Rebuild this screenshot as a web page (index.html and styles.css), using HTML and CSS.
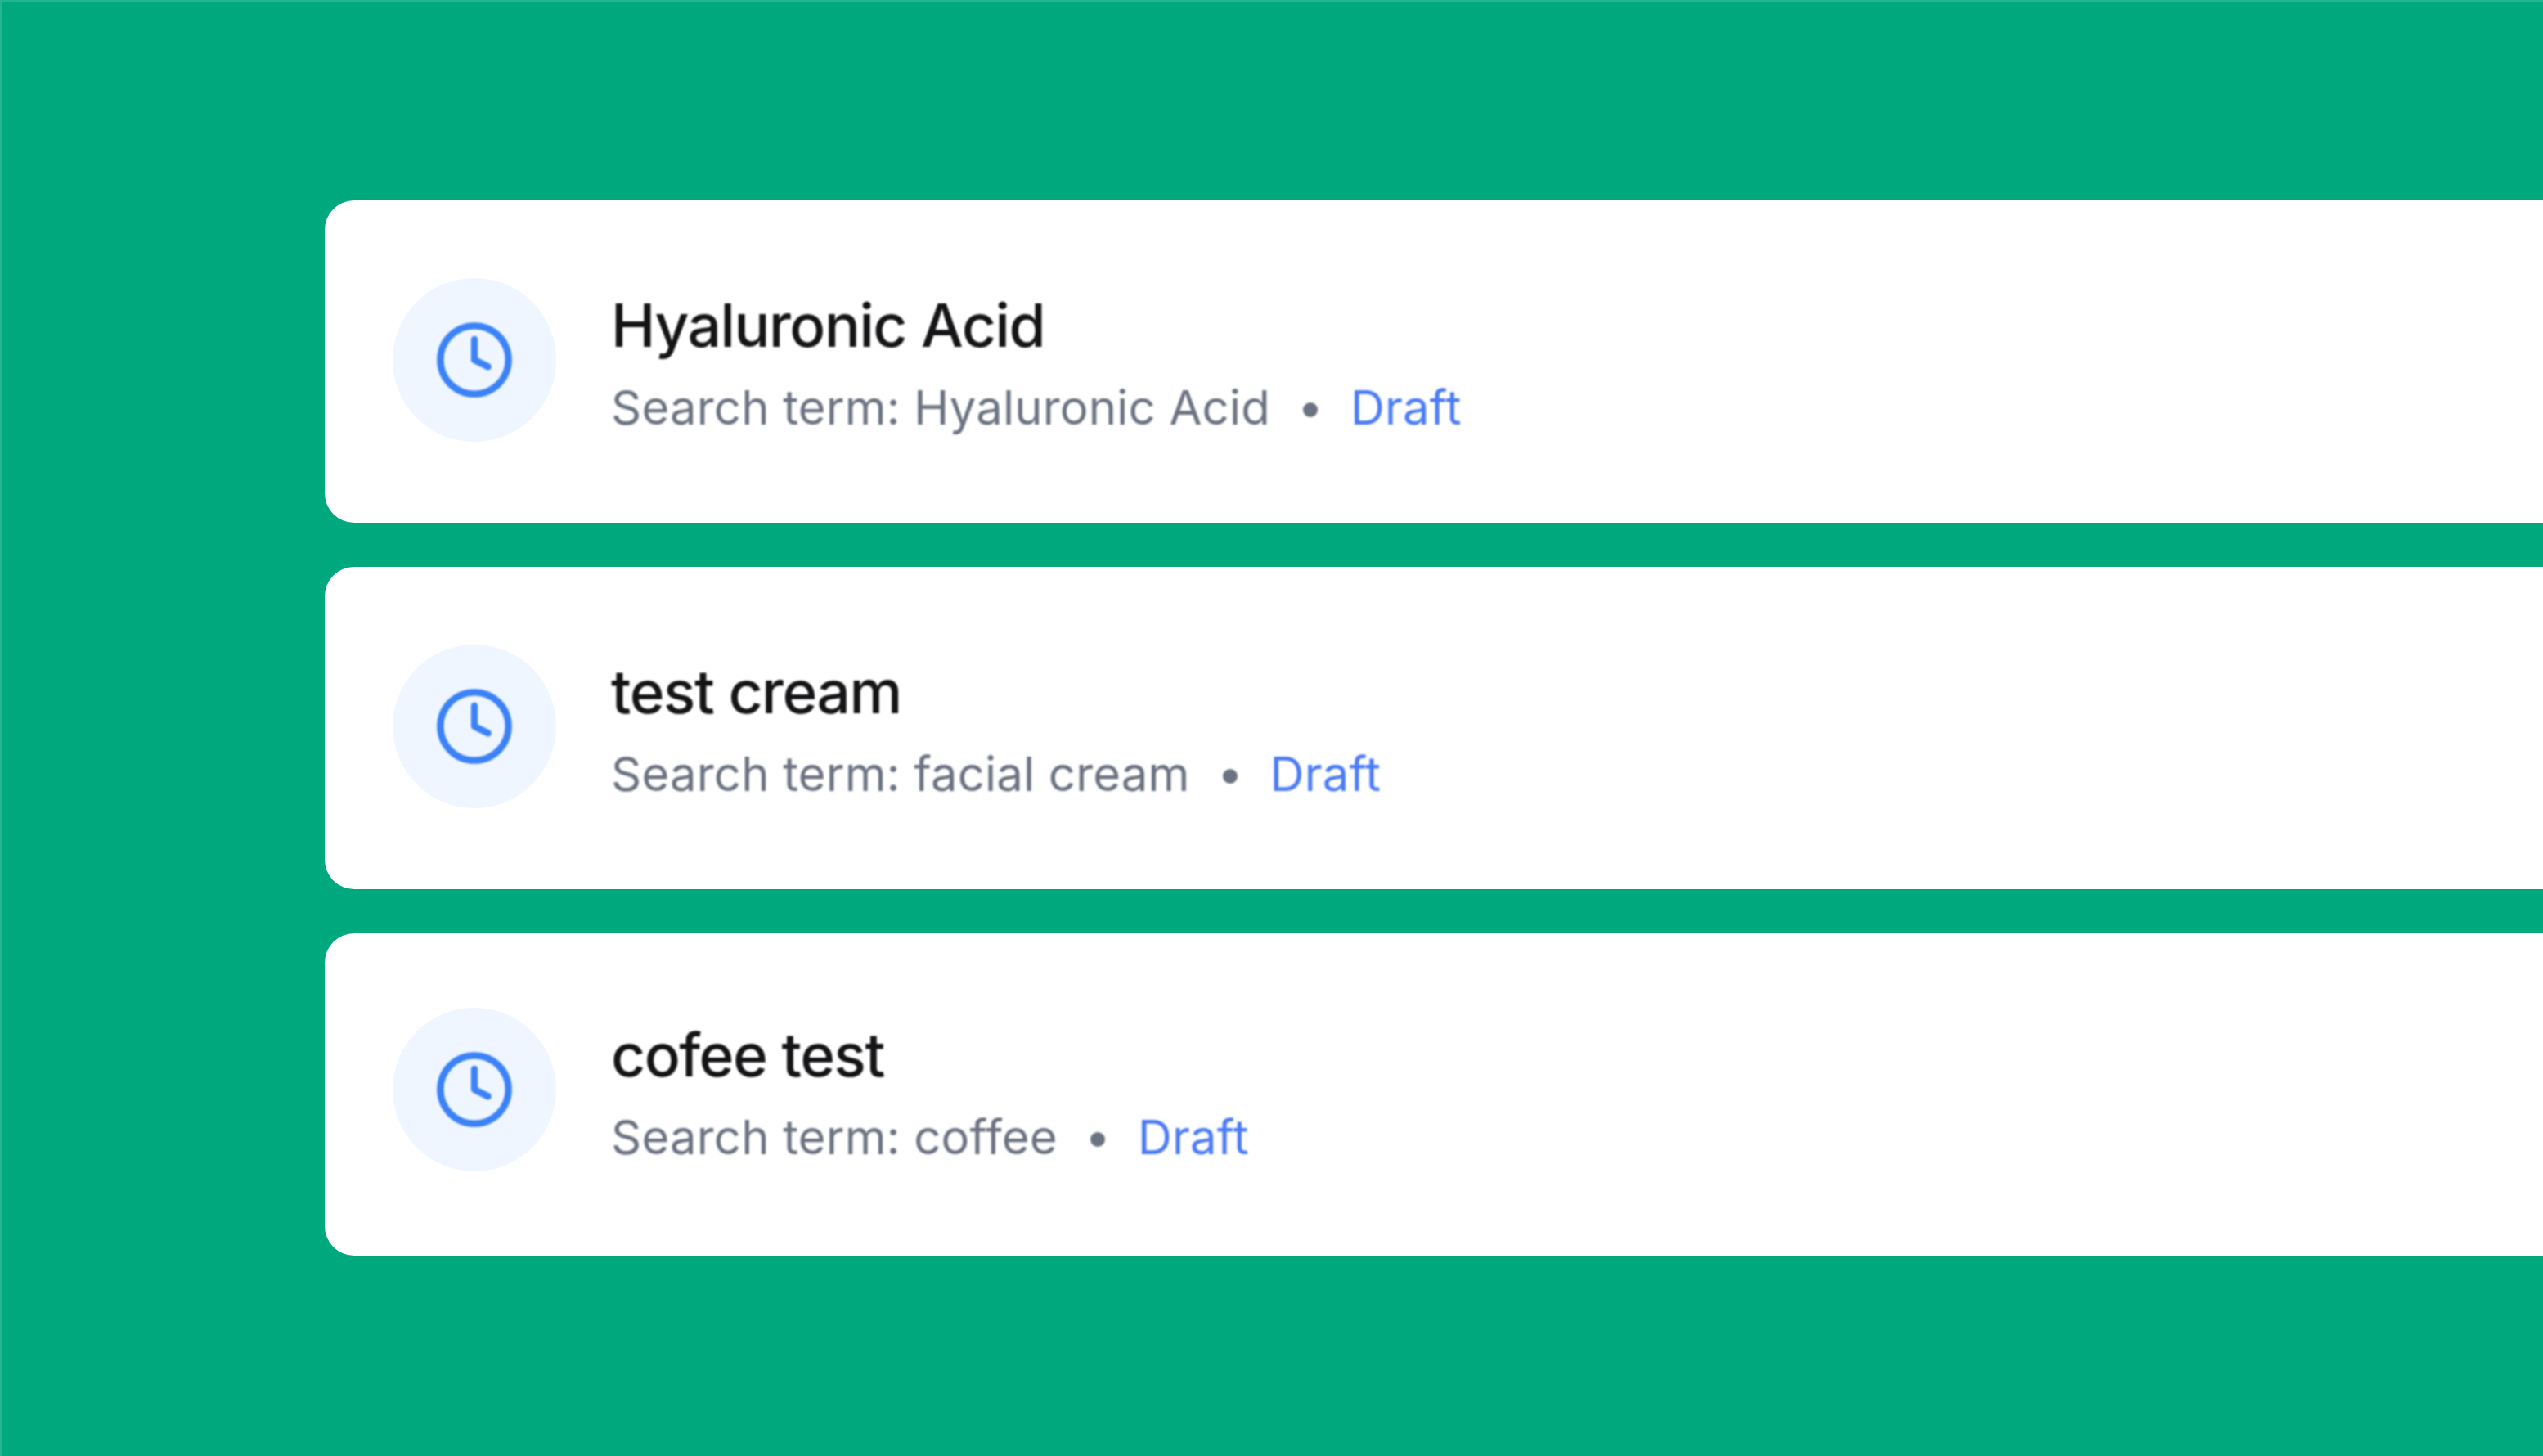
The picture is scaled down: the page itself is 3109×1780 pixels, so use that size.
FILE: index.html
```html
<!DOCTYPE html>
<html lang="en">
<head>
    <meta charset="UTF-8">
    <title>Searches</title>
    <link rel="stylesheet" href="styles.css">
</head>
<body>
    <div class="list">
        <div class="card">
            <div class="icon-wrap">
                <svg class="clock" viewBox="0 0 24 24"><circle cx="12" cy="12" r="10"/><polyline points="12 6 12 12 16 14"/></svg>
            </div>
            <div class="info">
                <div class="title">Hyaluronic Acid</div>
                <div class="meta"><span>Search term: Hyaluronic Acid</span><span class="dot"></span><span class="status">Draft</span></div>
            </div>
        </div>
        <div class="card">
            <div class="icon-wrap">
                <svg class="clock" viewBox="0 0 24 24"><circle cx="12" cy="12" r="10"/><polyline points="12 6 12 12 16 14"/></svg>
            </div>
            <div class="info">
                <div class="title">test cream</div>
                <div class="meta"><span>Search term: facial cream</span><span class="dot"></span><span class="status">Draft</span></div>
            </div>
        </div>
        <div class="card card-last">
            <div class="icon-wrap">
                <svg class="clock" viewBox="0 0 24 24"><circle cx="12" cy="12" r="10"/><polyline points="12 6 12 12 16 14"/></svg>
            </div>
            <div class="info">
                <div class="title">cofee test</div>
                <div class="meta"><span>Search term: coffee</span><span class="dot"></span><span class="status">Draft</span></div>
            </div>
        </div>
    </div>
</body>
</html>
```

FILE: styles.css
```css
html, body {
    height: 100%;
}
body {
    margin: 0;
    overflow: hidden;
    background: #00a87d;
    box-shadow: inset 2px 2px 0 rgba(255, 255, 255, 0.15);
    font-family: Inter, "Noto Sans", sans-serif;
}
.list {
    display: flex;
    flex-direction: column;
    gap: 54px;
    width: 3000px;
    padding: 245px 0 0 397px;
}
.card {
    display: flex;
    align-items: center;
    gap: 67px;
    box-sizing: border-box;
    height: 394px;
    padding: 0 0 4px 83px;
    background: #fff;
    border-radius: 36px;
}
.card-last {
    padding-bottom: 12px;
}
.icon-wrap {
    display: flex;
    align-items: center;
    justify-content: center;
    flex: none;
    width: 200px;
    height: 200px;
    border-radius: 50%;
    background: #eff6ff;
}
.clock {
    width: 100px;
    height: 100px;
    fill: none;
    stroke: #3b82f6;
    stroke-width: 2;
    stroke-linecap: round;
    stroke-linejoin: round;
    filter: blur(0.9px);
}
.info {
    padding-top: 8px;
    filter: blur(0.9px);
}
.title {
    margin-bottom: 20px;
    font-size: 73px;
    line-height: 88px;
    font-weight: 500;
    letter-spacing: -1.45px;
    color: #141416;
}
.meta {
    display: flex;
    align-items: center;
    font-size: 58px;
    line-height: 72px;
    letter-spacing: 0.2px;
    color: #6b7280;
}
.dot {
    width: 18px;
    height: 18px;
    margin: 6px 40px 0;
    border-radius: 50%;
    background: #6b7280;
}
.status {
    color: #4b7bf5;
}
```
